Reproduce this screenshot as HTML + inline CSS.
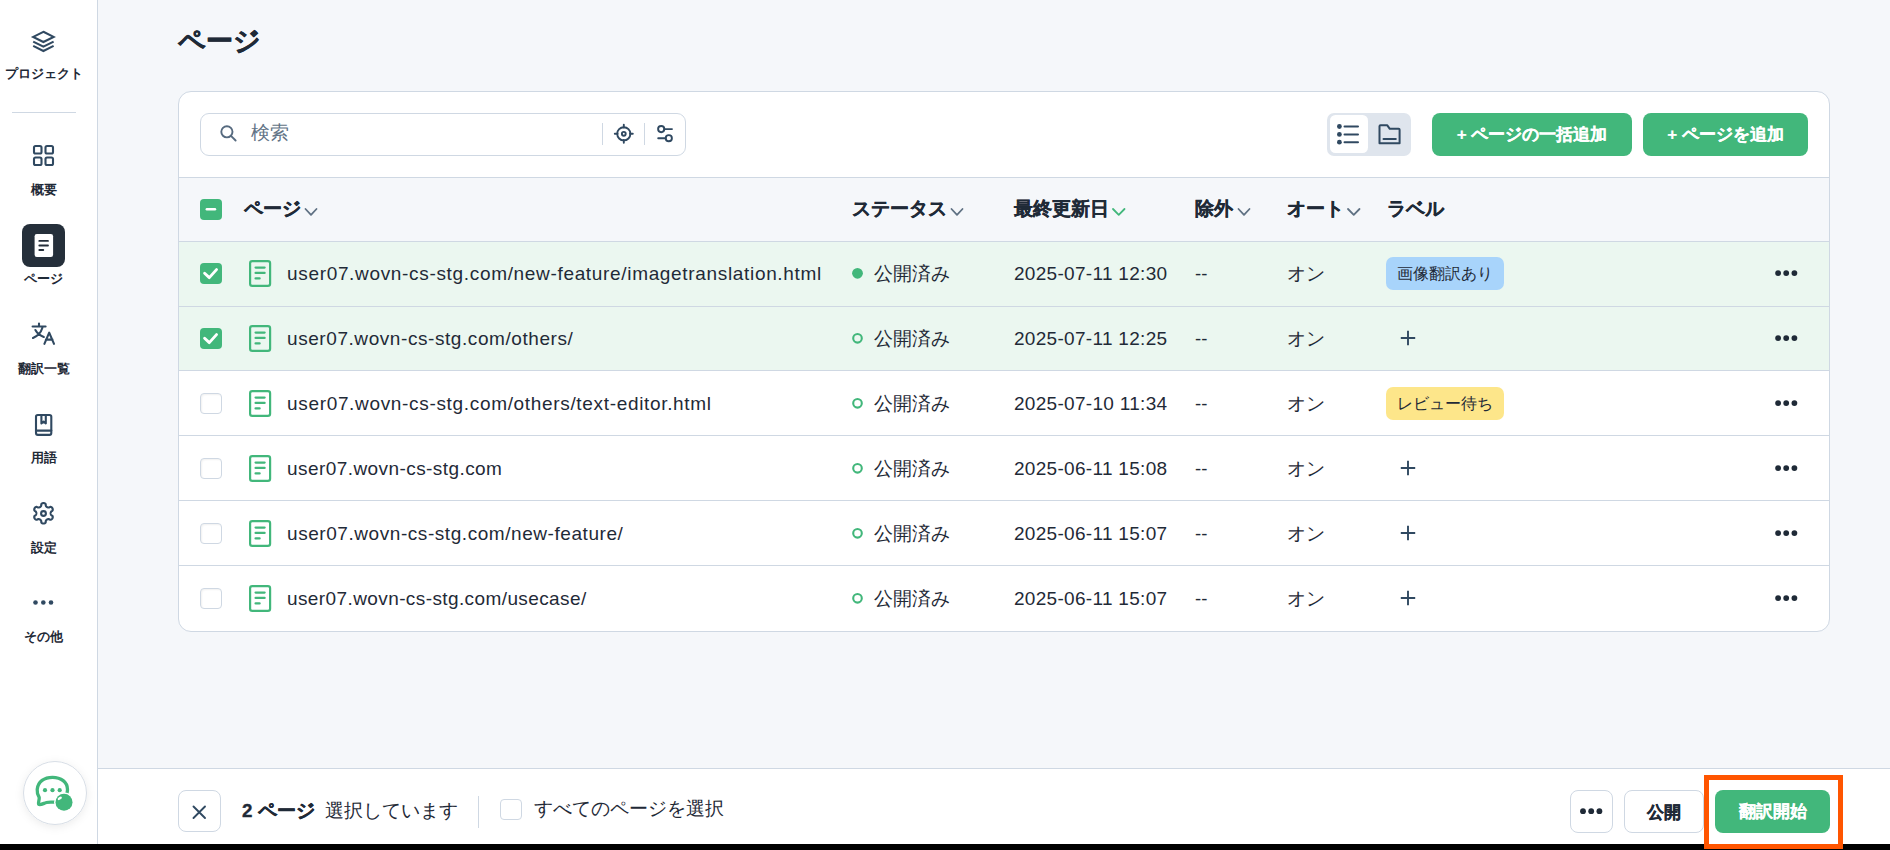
<!DOCTYPE html><html><head><meta charset="utf-8"><style>
*{box-sizing:border-box;margin:0;padding:0}
html,body{width:1890px;height:850px;overflow:hidden;background:#000}
body{font-family:"Liberation Sans",sans-serif;color:#1f2a37;position:relative}
.a{position:absolute;white-space:nowrap}
.tt{-webkit-text-stroke:0.45px currentColor}
.title{-webkit-text-stroke:0.5px currentColor}
.th{-webkit-text-stroke:0.3px currentColor}
.btn-g{-webkit-text-stroke:0.2px currentColor}
.nl{}
svg{position:absolute;overflow:visible}
#side{position:absolute;left:0;top:0;width:98px;height:844px;background:#fff;border-right:1px solid #cfd8e3}
#main{position:absolute;left:98px;top:0;width:1792px;height:844px;background:#f5f7fa}
.nl{position:absolute;left:0;width:87px;text-align:center;font-size:13px;font-weight:bold;color:#1f2a37;white-space:nowrap;line-height:16px}
.title{position:absolute;left:178px;top:24px;font-size:26.8px;font-weight:bold;color:#1f2a37;line-height:34px}
#card{position:absolute;left:178px;top:91px;width:1652px;height:541px;background:#fff;border:1px solid #cfd8e3;border-radius:13px;overflow:hidden}
.search{position:absolute;left:21px;top:21px;width:486px;height:43px;border:1px solid #cfd8e3;border-radius:9px;background:#fff}
.btn-g{position:absolute;top:21px;height:43px;background:#42b77b;color:#fff;border-radius:8px;font-size:17px;font-weight:bold;text-align:center;line-height:43px;white-space:nowrap}
.thead{position:absolute;left:0;top:85px;width:1652px;height:65px;background:#f5f7fa;border-top:1px solid #cfd8e3;border-bottom:1px solid #cfd8e3}
.th{position:absolute;top:0;height:62px;line-height:62px;font-size:18.6px;font-weight:bold;color:#1f2a37;white-space:nowrap}
.row{position:absolute;left:0;width:1652px;height:65px}
.row.sel{background:#ebf7f0}
.row.last{border-bottom:none}
.td{position:absolute;top:0;height:64px;line-height:64px;font-size:18.5px;color:#1f2a37;white-space:nowrap}
.url{font-size:19px;letter-spacing:0.67px}
.dt{font-size:19px;letter-spacing:0.3px}
.cb{position:absolute;left:21px;top:21px;width:22px;height:21px;border-radius:4px}
.cb.on{background:#42b77b}
.cb.off{border:1px solid #cfd8e3;background:#fff;box-shadow:inset 1px 1px 2px rgba(0,0,0,0.06)}
.badge{position:absolute;left:1207px;top:15px;height:33px;line-height:33px;padding:0 11px;border-radius:7px;font-size:16px;color:#1f2a37;white-space:nowrap}
#bottom{position:absolute;left:98px;top:768px;width:1792px;height:76px;background:#fff;border-top:1px solid #cfd8e3}
.obtn{position:absolute;top:790px;height:43px;border:1px solid #cfd8e3;border-radius:8px;background:#fff}
</style></head><body>
<div id="side"></div><div id="main"></div>
<svg style="left:0;top:0" width="98" height="700" viewBox="0 0 98 700">
  <g fill="none" stroke="#304961" stroke-width="2.1" stroke-linejoin="miter">
    <path d="M43.4 31.8 L53.6 36.9 L43.4 42 L33.2 36.9 Z"/>
    <path d="M33.2 41.6 L43.4 46.7 L53.6 41.6"/>
    <path d="M33.2 45.9 L43.4 51 L53.6 45.9"/>
  </g>
  <line x1="12" y1="112.5" x2="76" y2="112.5" stroke="#cfd8e3" stroke-width="1"/>
  <g fill="none" stroke="#304961" stroke-width="2.1">
    <rect x="34" y="146" width="7.5" height="7.5" rx="1.6"/>
    <rect x="45.5" y="146" width="7.5" height="7.5" rx="1.6"/>
    <rect x="34" y="157.5" width="7.5" height="7.5" rx="1.6"/>
    <rect x="45.5" y="157.5" width="7.5" height="7.5" rx="1.6"/>
  </g>
  <rect x="22" y="224" width="43" height="43" rx="8" fill="#252f3a"/>
  <rect x="34.6" y="234" width="18.5" height="23" rx="2.2" fill="#fff"/>
  <g stroke="#252f3a" stroke-width="1.8" stroke-linecap="round">
    <line x1="39.3" y1="240.9" x2="48" y2="240.9"/>
    <line x1="39.3" y1="245.5" x2="48" y2="245.5"/>
    <line x1="39.3" y1="250" x2="43.3" y2="250"/>
  </g>
  <g fill="none" stroke="#304961" stroke-width="2.1" stroke-linecap="round" stroke-linejoin="round">
    <path d="M32.6 326.5 H45.6 M39 323.6 V326.5 M42.4 327.8 C41 332.5 38 336 33 338 M35.4 330 C37 333 40 335.5 43.8 337"/>
    <path d="M44.4 343.8 L49.2 332.6 L54 343.8 M45.9 339.6 H52.5"/>
    <rect x="36" y="415" width="15.3" height="19.9" rx="1.8"/><path d="M36 430.6 H51.3"/>
    <path d="M41.4 415 V423.4 L43.6 421.7 L45.8 423.4 V415"/>
    <path d="M50.65 513.30 L50.66 513.11 L50.67 512.92 L50.71 512.73 L50.75 512.54 L50.81 512.34 L50.89 512.13 L50.99 511.91 L51.12 511.68 L51.31 511.43 L51.90 511.05 L52.49 510.64 L52.64 510.33 L52.73 510.03 L52.76 509.74 L52.76 509.46 L52.74 509.19 L52.68 508.92 L52.60 508.66 L52.50 508.41 L52.38 508.17 L52.23 507.95 L52.07 507.74 L51.88 507.54 L51.68 507.36 L51.45 507.20 L51.21 507.06 L50.94 506.94 L50.64 506.87 L50.30 506.85 L49.65 507.15 L49.03 507.48 L48.71 507.51 L48.44 507.51 L48.21 507.49 L47.99 507.45 L47.79 507.40 L47.59 507.34 L47.41 507.27 L47.24 507.20 L47.08 507.11 L46.92 507.01 L46.76 506.90 L46.61 506.78 L46.47 506.64 L46.32 506.49 L46.18 506.32 L46.04 506.12 L45.91 505.89 L45.78 505.60 L45.75 504.90 L45.69 504.19 L45.50 503.90 L45.28 503.68 L45.05 503.50 L44.81 503.36 L44.56 503.25 L44.30 503.16 L44.03 503.10 L43.77 503.06 L43.50 503.05 L43.23 503.06 L42.97 503.10 L42.70 503.16 L42.44 503.25 L42.19 503.36 L41.95 503.50 L41.72 503.68 L41.50 503.90 L41.31 504.19 L41.25 504.90 L41.22 505.60 L41.09 505.89 L40.96 506.12 L40.82 506.32 L40.68 506.49 L40.53 506.64 L40.39 506.78 L40.24 506.90 L40.08 507.01 L39.93 507.11 L39.76 507.20 L39.59 507.27 L39.41 507.34 L39.21 507.40 L39.01 507.45 L38.79 507.49 L38.56 507.51 L38.29 507.51 L37.97 507.48 L37.35 507.15 L36.70 506.85 L36.36 506.87 L36.06 506.94 L35.79 507.06 L35.55 507.20 L35.32 507.36 L35.12 507.54 L34.93 507.74 L34.77 507.95 L34.62 508.17 L34.50 508.41 L34.40 508.66 L34.32 508.92 L34.26 509.19 L34.24 509.46 L34.24 509.74 L34.27 510.03 L34.36 510.33 L34.51 510.64 L35.10 511.05 L35.69 511.43 L35.88 511.68 L36.01 511.91 L36.11 512.13 L36.19 512.34 L36.25 512.54 L36.29 512.73 L36.33 512.92 L36.34 513.11 L36.35 513.30 L36.34 513.49 L36.33 513.68 L36.29 513.87 L36.25 514.06 L36.19 514.26 L36.11 514.47 L36.01 514.69 L35.88 514.92 L35.69 515.17 L35.10 515.55 L34.51 515.96 L34.36 516.27 L34.27 516.57 L34.24 516.86 L34.24 517.14 L34.26 517.41 L34.32 517.68 L34.40 517.94 L34.50 518.19 L34.62 518.42 L34.77 518.65 L34.93 518.86 L35.12 519.06 L35.32 519.24 L35.55 519.40 L35.79 519.54 L36.06 519.66 L36.36 519.73 L36.70 519.75 L37.35 519.45 L37.97 519.12 L38.29 519.09 L38.56 519.09 L38.79 519.11 L39.01 519.15 L39.21 519.20 L39.41 519.26 L39.59 519.33 L39.76 519.40 L39.92 519.49 L40.08 519.59 L40.24 519.70 L40.39 519.82 L40.53 519.96 L40.68 520.11 L40.82 520.28 L40.96 520.48 L41.09 520.71 L41.22 521.00 L41.25 521.70 L41.31 522.41 L41.50 522.70 L41.72 522.92 L41.95 523.10 L42.19 523.24 L42.44 523.35 L42.70 523.44 L42.97 523.50 L43.23 523.54 L43.50 523.55 L43.77 523.54 L44.03 523.50 L44.30 523.44 L44.56 523.35 L44.81 523.24 L45.05 523.10 L45.28 522.92 L45.50 522.70 L45.69 522.41 L45.75 521.70 L45.78 521.00 L45.91 520.71 L46.04 520.48 L46.18 520.28 L46.32 520.11 L46.47 519.96 L46.61 519.82 L46.76 519.70 L46.92 519.59 L47.08 519.49 L47.24 519.40 L47.41 519.33 L47.59 519.26 L47.79 519.20 L47.99 519.15 L48.21 519.11 L48.44 519.09 L48.71 519.09 L49.03 519.12 L49.65 519.45 L50.30 519.75 L50.64 519.73 L50.94 519.66 L51.21 519.54 L51.45 519.40 L51.68 519.24 L51.88 519.06 L52.07 518.86 L52.23 518.65 L52.38 518.42 L52.50 518.19 L52.60 517.94 L52.68 517.68 L52.74 517.41 L52.76 517.14 L52.76 516.86 L52.73 516.57 L52.64 516.27 L52.49 515.96 L51.90 515.55 L51.31 515.17 L51.12 514.92 L50.99 514.69 L50.89 514.47 L50.81 514.26 L50.75 514.06 L50.71 513.87 L50.67 513.68 L50.66 513.49 L50.65 513.30Z"/>
    <circle cx="43.5" cy="513.5" r="2.4"/>
  </g>
  <g fill="#304961">
    <circle cx="35.5" cy="602.5" r="2.3"/><circle cx="43.3" cy="602.5" r="2.3"/><circle cx="51" cy="602.5" r="2.3"/>
  </g>
</svg>
<div class="nl" style="top:66px">プロジェクト</div>
<div class="nl" style="top:182px">概要</div>
<div class="nl" style="top:271px">ページ</div>
<div class="nl" style="top:361px">翻訳一覧</div>
<div class="nl" style="top:450px">用語</div>
<div class="nl" style="top:540px">設定</div>
<div class="nl" style="top:629px">その他</div>
<div class="title">ページ</div>
<div id="card"><div class="search"></div>
<div class="btn-g" style="left:1253px;width:200px">+ ページの一括追加</div>
<div class="btn-g" style="left:1464px;width:165px">+ ページを追加</div>
<div class="thead"><div class="cb on" style="top:21px"></div>
<div class="th" style="left:65px">ページ</div>
<div class="th" style="left:673px">ステータス</div>
<div class="th" style="left:835px">最終更新日</div>
<div class="th" style="left:1016px">除外</div>
<div class="th" style="left:1108px">オート</div>
<div class="th" style="left:1208px">ラベル</div>
</div>
<div class="a" style="left:0;top:150px;width:1652px;height:128px;background:#ebf7f0"></div>
<div class="a" style="left:0;top:214px;width:1652px;height:1px;background:#cfd8e3"></div>
<div class="a" style="left:0;top:278px;width:1652px;height:1px;background:#cfd8e3"></div>
<div class="a" style="left:0;top:343px;width:1652px;height:1px;background:#cfd8e3"></div>
<div class="a" style="left:0;top:408px;width:1652px;height:1px;background:#cfd8e3"></div>
<div class="a" style="left:0;top:473px;width:1652px;height:1px;background:#cfd8e3"></div>
<div class="row" style="top:150px">
<div class="cb on"></div>
<div class="td url" style="left:108px;letter-spacing:0.67px">user07.wovn-cs-stg.com/new-feature/imagetranslation.html</div>
<div class="td" style="left:695px">公開済み</div>
<div class="td dt" style="left:835px">2025-07-11 12:30</div>
<div class="td" style="left:1016px">--</div>
<div class="td" style="left:1108px">オン</div>
<div class="badge" style="background:#a8d4fb">画像翻訳あり</div>
</div>
<div class="row" style="top:215px">
<div class="cb on"></div>
<div class="td url" style="left:108px;letter-spacing:0.57px">user07.wovn-cs-stg.com/others/</div>
<div class="td" style="left:695px">公開済み</div>
<div class="td dt" style="left:835px">2025-07-11 12:25</div>
<div class="td" style="left:1016px">--</div>
<div class="td" style="left:1108px">オン</div>
</div>
<div class="row" style="top:280px">
<div class="cb off"></div>
<div class="td url" style="left:108px;letter-spacing:0.67px">user07.wovn-cs-stg.com/others/text-editor.html</div>
<div class="td" style="left:695px">公開済み</div>
<div class="td dt" style="left:835px">2025-07-10 11:34</div>
<div class="td" style="left:1016px">--</div>
<div class="td" style="left:1108px">オン</div>
<div class="badge" style="background:#fde68a">レビュー待ち</div>
</div>
<div class="row" style="top:345px">
<div class="cb off"></div>
<div class="td url" style="left:108px;letter-spacing:0.43px">user07.wovn-cs-stg.com</div>
<div class="td" style="left:695px">公開済み</div>
<div class="td dt" style="left:835px">2025-06-11 15:08</div>
<div class="td" style="left:1016px">--</div>
<div class="td" style="left:1108px">オン</div>
</div>
<div class="row" style="top:410px">
<div class="cb off"></div>
<div class="td url" style="left:108px;letter-spacing:0.56px">user07.wovn-cs-stg.com/new-feature/</div>
<div class="td" style="left:695px">公開済み</div>
<div class="td dt" style="left:835px">2025-06-11 15:07</div>
<div class="td" style="left:1016px">--</div>
<div class="td" style="left:1108px">オン</div>
</div>
<div class="row" style="top:475px">
<div class="cb off"></div>
<div class="td url" style="left:108px;letter-spacing:0.4px">user07.wovn-cs-stg.com/usecase/</div>
<div class="td" style="left:695px">公開済み</div>
<div class="td dt" style="left:835px">2025-06-11 15:07</div>
<div class="td" style="left:1016px">--</div>
<div class="td" style="left:1108px">オン</div>
</div>
</div>
<svg style="left:0;top:0;z-index:5" width="1890" height="850" viewBox="0 0 1890 850">
<line x1="206.8" y1="209.3" x2="215" y2="209.3" stroke="#fff" stroke-width="2.4" stroke-linecap="round"/>
<path d="M305.5 209 L311.0 214.8 L316.5 209" fill="none" stroke="#5f7183" stroke-width="1.8" stroke-linecap="round" stroke-linejoin="round"/>
<path d="M951.5 209 L957.0 214.8 L962.5 209" fill="none" stroke="#5f7183" stroke-width="1.8" stroke-linecap="round" stroke-linejoin="round"/>
<path d="M1113 209 L1118.75 214.8 L1124.5 209" fill="none" stroke="#42b77b" stroke-width="1.8" stroke-linecap="round" stroke-linejoin="round"/>
<path d="M1238.5 209 L1244.0 214.8 L1249.5 209" fill="none" stroke="#5f7183" stroke-width="1.8" stroke-linecap="round" stroke-linejoin="round"/>
<path d="M1348 209 L1353.75 214.8 L1359.5 209" fill="none" stroke="#5f7183" stroke-width="1.8" stroke-linecap="round" stroke-linejoin="round"/>
<path d="M204.6 273.2 L209.3 277.6 L216.5 269.6" fill="none" stroke="#fff" stroke-width="2.9" stroke-linecap="round" stroke-linejoin="round"/>
<rect x="250.1" y="261.1" width="20" height="24.8" rx="2.2" fill="none" stroke="#42b77b" stroke-width="2.2"/>
<g stroke="#42b77b" stroke-width="2.3" stroke-linecap="round"><line x1="255.6" y1="267.6" x2="264.6" y2="267.6"/><line x1="255.6" y1="272.9" x2="264.6" y2="272.9"/><line x1="255.6" y1="278.4" x2="259.6" y2="278.4"/></g>
<circle cx="857.5" cy="273.3" r="5.4" fill="#42b77b"/>
<circle cx="1778.1" cy="273.1" r="2.9" fill="#1f2a37"/>
<circle cx="1786.2" cy="273.1" r="2.9" fill="#1f2a37"/>
<circle cx="1794.4" cy="273.1" r="2.9" fill="#1f2a37"/>
<path d="M204.6 338.2 L209.3 342.6 L216.5 334.6" fill="none" stroke="#fff" stroke-width="2.9" stroke-linecap="round" stroke-linejoin="round"/>
<rect x="250.1" y="326.1" width="20" height="24.8" rx="2.2" fill="none" stroke="#42b77b" stroke-width="2.2"/>
<g stroke="#42b77b" stroke-width="2.3" stroke-linecap="round"><line x1="255.6" y1="332.6" x2="264.6" y2="332.6"/><line x1="255.6" y1="337.9" x2="264.6" y2="337.9"/><line x1="255.6" y1="343.4" x2="259.6" y2="343.4"/></g>
<circle cx="857.5" cy="338.3" r="4.3" fill="none" stroke="#42b77b" stroke-width="2.1"/>
<path d="M1400.8 338.0 H1415.2 M1408 330.8 V345.2" stroke="#304961" stroke-width="1.9" fill="none"/>
<circle cx="1778.1" cy="338.1" r="2.9" fill="#1f2a37"/>
<circle cx="1786.2" cy="338.1" r="2.9" fill="#1f2a37"/>
<circle cx="1794.4" cy="338.1" r="2.9" fill="#1f2a37"/>
<rect x="250.1" y="391.1" width="20" height="24.8" rx="2.2" fill="none" stroke="#42b77b" stroke-width="2.2"/>
<g stroke="#42b77b" stroke-width="2.3" stroke-linecap="round"><line x1="255.6" y1="397.6" x2="264.6" y2="397.6"/><line x1="255.6" y1="402.9" x2="264.6" y2="402.9"/><line x1="255.6" y1="408.4" x2="259.6" y2="408.4"/></g>
<circle cx="857.5" cy="403.3" r="4.3" fill="none" stroke="#42b77b" stroke-width="2.1"/>
<circle cx="1778.1" cy="403.1" r="2.9" fill="#1f2a37"/>
<circle cx="1786.2" cy="403.1" r="2.9" fill="#1f2a37"/>
<circle cx="1794.4" cy="403.1" r="2.9" fill="#1f2a37"/>
<rect x="250.1" y="456.1" width="20" height="24.8" rx="2.2" fill="none" stroke="#42b77b" stroke-width="2.2"/>
<g stroke="#42b77b" stroke-width="2.3" stroke-linecap="round"><line x1="255.6" y1="462.6" x2="264.6" y2="462.6"/><line x1="255.6" y1="467.9" x2="264.6" y2="467.9"/><line x1="255.6" y1="473.4" x2="259.6" y2="473.4"/></g>
<circle cx="857.5" cy="468.3" r="4.3" fill="none" stroke="#42b77b" stroke-width="2.1"/>
<path d="M1400.8 468.0 H1415.2 M1408 460.8 V475.2" stroke="#304961" stroke-width="1.9" fill="none"/>
<circle cx="1778.1" cy="468.1" r="2.9" fill="#1f2a37"/>
<circle cx="1786.2" cy="468.1" r="2.9" fill="#1f2a37"/>
<circle cx="1794.4" cy="468.1" r="2.9" fill="#1f2a37"/>
<rect x="250.1" y="521.1" width="20" height="24.8" rx="2.2" fill="none" stroke="#42b77b" stroke-width="2.2"/>
<g stroke="#42b77b" stroke-width="2.3" stroke-linecap="round"><line x1="255.6" y1="527.6" x2="264.6" y2="527.6"/><line x1="255.6" y1="532.9" x2="264.6" y2="532.9"/><line x1="255.6" y1="538.4" x2="259.6" y2="538.4"/></g>
<circle cx="857.5" cy="533.3" r="4.3" fill="none" stroke="#42b77b" stroke-width="2.1"/>
<path d="M1400.8 533.0 H1415.2 M1408 525.8 V540.2" stroke="#304961" stroke-width="1.9" fill="none"/>
<circle cx="1778.1" cy="533.1" r="2.9" fill="#1f2a37"/>
<circle cx="1786.2" cy="533.1" r="2.9" fill="#1f2a37"/>
<circle cx="1794.4" cy="533.1" r="2.9" fill="#1f2a37"/>
<rect x="250.1" y="586.1" width="20" height="24.8" rx="2.2" fill="none" stroke="#42b77b" stroke-width="2.2"/>
<g stroke="#42b77b" stroke-width="2.3" stroke-linecap="round"><line x1="255.6" y1="592.6" x2="264.6" y2="592.6"/><line x1="255.6" y1="597.9" x2="264.6" y2="597.9"/><line x1="255.6" y1="603.4" x2="259.6" y2="603.4"/></g>
<circle cx="857.5" cy="598.3" r="4.3" fill="none" stroke="#42b77b" stroke-width="2.1"/>
<path d="M1400.8 598.0 H1415.2 M1408 590.8 V605.2" stroke="#304961" stroke-width="1.9" fill="none"/>
<circle cx="1778.1" cy="598.1" r="2.9" fill="#1f2a37"/>
<circle cx="1786.2" cy="598.1" r="2.9" fill="#1f2a37"/>
<circle cx="1794.4" cy="598.1" r="2.9" fill="#1f2a37"/>

  <g fill="none" stroke="#566a7f" stroke-width="1.9" stroke-linecap="round">
    <circle cx="226.9" cy="131.8" r="5.6"/>
    <line x1="231" y1="135.9" x2="235.6" y2="140.5"/>
  </g>
  <line x1="602.5" y1="123" x2="602.5" y2="145" stroke="#cfd8e3" stroke-width="1"/>
  <line x1="644.5" y1="123" x2="644.5" y2="145" stroke="#cfd8e3" stroke-width="1"/>
  <g fill="none" stroke="#304961" stroke-width="1.9" stroke-linecap="round">
    <circle cx="623.8" cy="133.8" r="6.6"/>
    <circle cx="623.8" cy="133.8" r="1.9"/>
    <path d="M623.8 124.8 V127.6 M623.8 140 V142.8 M614.8 133.8 H617.6 M630 133.8 H632.8"/>
    <circle cx="661.2" cy="129.1" r="3.1"/>
    <line x1="664.3" y1="129.1" x2="672" y2="129.1"/>
    <circle cx="668.8" cy="138.2" r="3.1"/>
    <line x1="658.2" y1="138.2" x2="665.7" y2="138.2"/>
  </g>
  <rect x="1327" y="113" width="84" height="43" rx="7" fill="#dfe5ed"/>
  <rect x="1330" y="115" width="38" height="38" rx="5.5" fill="#fff"/>
  <g fill="#304961">
    <circle cx="1339.4" cy="126.5" r="2.4"/><circle cx="1339.4" cy="134.4" r="2.4"/><circle cx="1339.4" cy="142.2" r="2.4"/>
  </g>
  <g fill="none" stroke="#304961" stroke-width="2" stroke-linecap="round" stroke-linejoin="round">
    <path d="M1344.5 126.5 H1358 M1344.5 134.4 H1358 M1344.5 142.2 H1358"/>
    <path d="M1379.5 143.3 V126.3 a1 1 0 0 1 1 -1 H1387.3 L1389.8 128.8 H1398.6 a1 1 0 0 1 1 1 V143.3 Z"/>
    <path d="M1383.5 138.9 H1395.8"/>
  </g>

</svg>
<div class="a" style="left:251px;top:120px;font-size:18.5px;line-height:26px;color:#627386;z-index:7">検索</div>
<div id="bottom"></div>
<div class="obtn" style="left:178px;width:43px;height:42px"></div>
<div class="a" style="left:242px;top:798px;font-size:18.8px;line-height:26px;font-weight:bold;-webkit-text-stroke:0.35px currentColor">2 ページ</div>
<div class="a" style="left:325px;top:798px;font-size:18.5px;line-height:26px">選択しています</div>
<div class="a" style="left:478px;top:796px;width:1px;height:32px;background:#cfd8e3"></div>
<div class="a" style="left:500px;top:799px;width:22px;height:21px;border:1px solid #cfd8e3;border-radius:4px;background:#fff"></div>
<div class="a" style="left:534px;top:796px;font-size:18.5px;line-height:26px">すべてのページを選択</div>
<div class="obtn" style="left:1570px;width:43px"></div>
<div class="obtn" style="left:1624px;width:80px;text-align:center;line-height:43px;font-size:17px;font-weight:bold;-webkit-text-stroke:0.3px currentColor">公開</div>
<div class="a" style="left:1715px;top:790px;width:115px;height:43px;background:#42b77b;border-radius:8px;color:#fff;text-align:center;line-height:43px;font-size:17px;font-weight:bold;-webkit-text-stroke:0.15px currentColor">翻訳開始</div>
<div class="a" style="left:1704px;top:775px;width:139px;height:74px;border:5px solid #ff5500"></div>
<svg style="left:0;top:0;z-index:8" width="1890" height="850" viewBox="0 0 1890 850">
  <g fill="none" stroke="#304961" stroke-width="1.9" stroke-linecap="round">
    <path d="M193.5 806.5 L205 818 M205 806.5 L193.5 818"/>
  </g>
  <g fill="#1f2a37">
    <circle cx="1583" cy="811.2" r="2.9"/><circle cx="1591.2" cy="811.2" r="2.9"/><circle cx="1599.4" cy="811.2" r="2.9"/>
  </g>
  <defs><filter id="sh" x="-50%" y="-50%" width="200%" height="200%"><feDropShadow dx="0" dy="2" stdDeviation="4" flood-color="#000" flood-opacity="0.08"/></filter></defs>
  <circle cx="55" cy="793" r="31.5" fill="#fff" stroke="#d8dee6" stroke-width="1" filter="url(#sh)"/>
  <g fill="none" stroke="#42b77b" stroke-width="3.3" stroke-linecap="round" stroke-linejoin="round">
    <path d="M57 802.3 C54 802.3 50 801.5 46.5 802.5 C43.5 803.5 41 805 39 804.5 C37.5 804 39.5 800 39.2 797.5 C37.5 795 37 792 37.2 789.5 C37.8 781.5 44.5 777.3 52.5 777.3 C61 777.3 67.5 782 67.5 789.5 C67.5 791 67.2 792.5 66.8 793.5"/>
  </g>
  <g fill="#42b77b">
    <circle cx="45" cy="790.2" r="2.1"/><circle cx="52.5" cy="790.2" r="2.1"/><circle cx="59.7" cy="790.2" r="2.1"/>
  </g>
  <circle cx="64" cy="802.3" r="10" fill="#fff"/>
  <circle cx="64" cy="802.3" r="8.5" fill="#42b77b"/>
  <ellipse cx="59.8" cy="798.3" rx="2.4" ry="1.3" transform="rotate(-35 59.8 798.3)" fill="#fff"/>
</svg>
</body></html>
